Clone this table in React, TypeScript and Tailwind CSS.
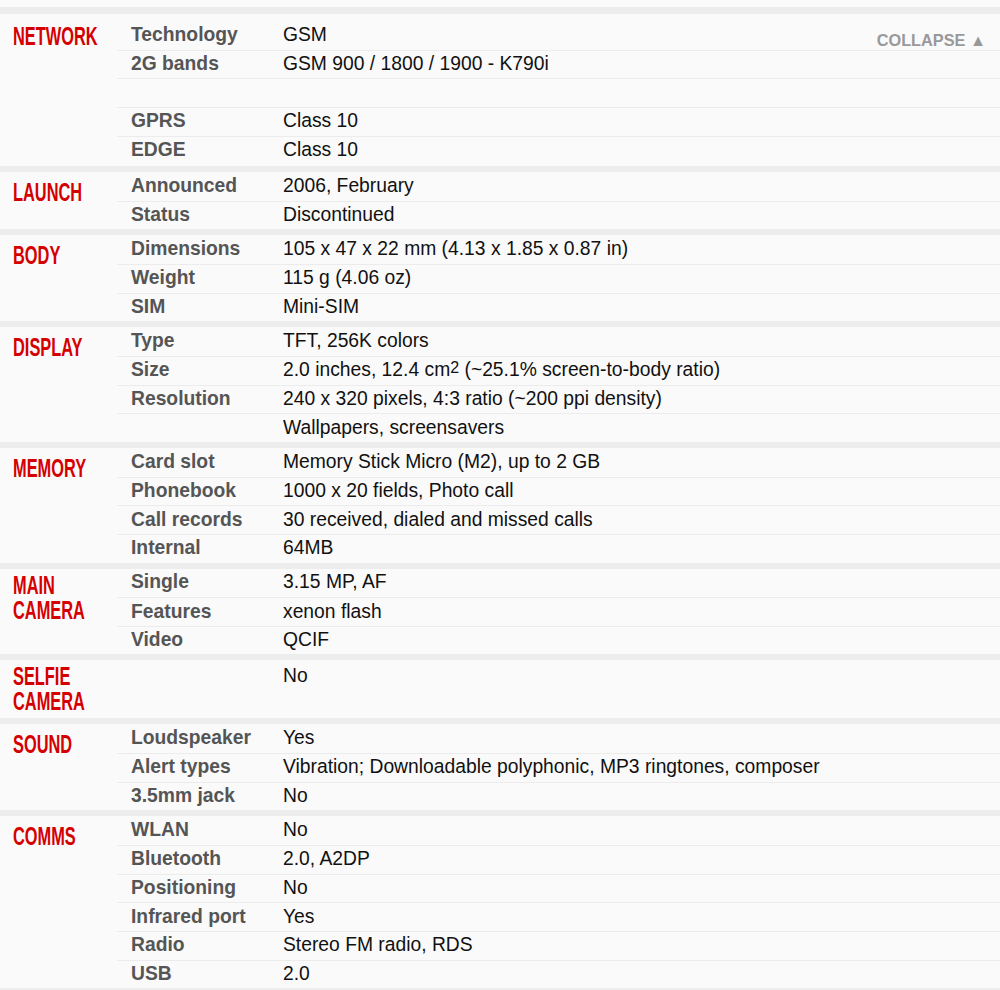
import React from 'react'

type Row = [string, React.ReactNode]

type Section = {
  title: string[]
  rows: Row[]
  extra?: string
  rowsPad?: string
  headPad?: string
}

const sections: Section[] = [
  {
    title: ['NETWORK'],
    rowsPad: 'pt-[7px] pb-[2px]',
    headPad: 'pt-[10px]',
    rows: [
      ['Technology', 'GSM'],
      ['2G bands', 'GSM 900 / 1800 / 1900 - K790i'],
      ['', ''],
      ['GPRS', 'Class 10'],
      ['EDGE', 'Class 10'],
    ],
  },
  {
    title: ['LAUNCH'],
    rows: [
      ['Announced', '2006, February'],
      ['Status', 'Discontinued'],
    ],
  },
  {
    title: ['BODY'],
    rows: [
      ['Dimensions', '105 x 47 x 22 mm (4.13 x 1.85 x 0.87 in)'],
      ['Weight', '115 g (4.06 oz)'],
      ['SIM', 'Mini-SIM'],
    ],
  },
  {
    title: ['DISPLAY'],
    rows: [
      ['Type', 'TFT, 256K colors'],
      [
        'Size',
        <>
          2.0 inches, 12.4 cm<sup className="text-[16px] relative -top-[3px]">2</sup> (~25.1% screen-to-body ratio)
        </>,
      ],
      ['Resolution', '240 x 320 pixels, 4:3 ratio (~200 ppi density)'],
      ['', 'Wallpapers, screensavers'],
    ],
  },
  {
    title: ['MEMORY'],
    rows: [
      ['Card slot', 'Memory Stick Micro (M2), up to 2 GB'],
      ['Phonebook', '1000 x 20 fields, Photo call'],
      ['Call records', '30 received, dialed and missed calls'],
      ['Internal', '64MB'],
    ],
  },
  {
    title: ['MAIN', 'CAMERA'],
    headPad: 'pt-[4px]',
    rows: [
      ['Single', '3.15 MP, AF'],
      ['Features', 'xenon flash'],
      ['Video', 'QCIF'],
    ],
  },
  {
    title: ['SELFIE', 'CAMERA'],
    extra: 'h-[58px]',
    headPad: 'pt-[4px]',
    rowsPad: 'pt-[2px]',
    rows: [['', 'No']],
  },
  {
    title: ['SOUND'],
    rows: [
      ['Loudspeaker', 'Yes'],
      ['Alert types', 'Vibration; Downloadable polyphonic, MP3 ringtones, composer'],
      ['3.5mm jack', 'No'],
    ],
  },
  {
    title: ['COMMS'],
    rows: [
      ['WLAN', 'No'],
      ['Bluetooth', '2.0, A2DP'],
      ['Positioning', 'No'],
      ['Infrared port', 'Yes'],
      ['Radio', 'Stereo FM radio, RDS'],
      ['USB', '2.0'],
    ],
  },
]

const SpecSection = ({ section, first }: { section: Section; first: boolean }) => (
  <div className={`relative flex bg-[#fafafa] ${section.extra ?? ''}`}>
    <div className={`w-[117px] shrink-0 pl-[13px] ${section.headPad ?? 'pt-[8px]'}`}>
      <div className="inline-block origin-top-left scale-x-[0.63] font-['Liberation_Sans',sans-serif] text-[26px] font-bold leading-[25px] text-[#d50000] whitespace-nowrap">
        {section.title.map((line) => (
          <div key={line}>{line}</div>
        ))}
      </div>
    </div>
    <div className={`flex-1 ${section.rowsPad ?? ''}`}>
      {section.rows.map(([label, value], i) => (
        <div
          key={i}
          className={`flex h-[28.65px] items-center ${i > 0 ? 'border-t border-[#ececec]' : ''}`}
        >
          <div className="w-[166px] shrink-0 pl-[14px] font-bold text-[#555]">{label}</div>
          <div className="text-[#111] whitespace-nowrap">{value}</div>
        </div>
      ))}
    </div>
    {first && (
      <div className="absolute right-[14px] top-[14px] text-[16.3px] font-bold text-[#999]">
        COLLAPSE ▲
      </div>
    )}
  </div>
)

export default function App() {
  return (
    <div className="w-[1000px] h-[990px] overflow-hidden bg-[#fafafa] pt-[7px] font-['Liberation_Sans',Arial,sans-serif] text-[19.3px]">
      {sections.map((s, i) => (
        <React.Fragment key={s.title.join(' ')}>
          <div className={`${i === 0 ? 'h-[7px]' : 'h-[6px]'} bg-[#ededed]`} />
          <SpecSection section={s} first={i === 0} />
        </React.Fragment>
      ))}
      <div className="h-[7px] bg-[#ededed]" />
    </div>
  )
}
